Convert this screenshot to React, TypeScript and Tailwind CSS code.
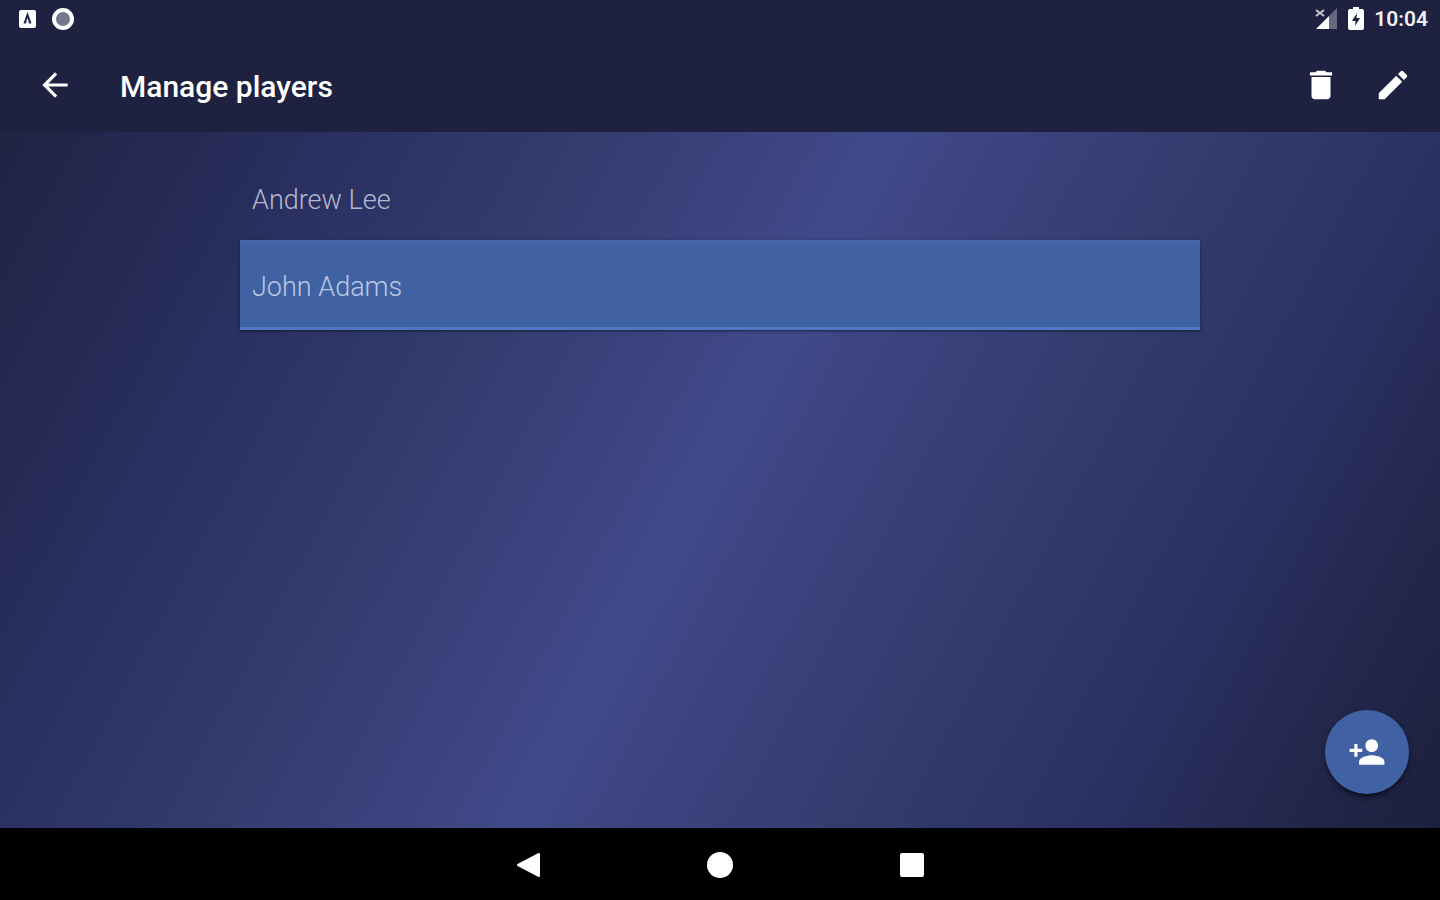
import { useState } from 'react';
import { MdArrowBack, MdDelete, MdEdit, MdPersonAdd } from 'react-icons/md';

const players = ['Andrew Lee', 'John Adams'];

const StatusBar = () => {
  return (
    <div className="flex h-[38px] items-center justify-between pl-[18px] pr-3">
      <div className="flex items-center gap-3">
        <svg width="20" height="20" viewBox="0 0 20 20" aria-hidden="true">
          <rect x="1" y="1" width="17" height="18" rx="2" fill="#fff" />
          <path d="M6.5 14.5 9.5 6l3 8.500M7.500 12.500h1M10.500 12.500h1" fill="none" stroke="#1e2140" strokeWidth="2" />
        </svg>
        <svg width="26" height="24" viewBox="0 0 26 24" aria-hidden="true">
          <circle cx="13" cy="12" r="9" fill="#77778f" stroke="#fff" strokeWidth="4" />
        </svg>
      </div>
      <div className="flex items-center gap-2.5">
        <svg width="24" height="22" viewBox="0 0 24 22" aria-hidden="true">
          <path d="M23 0v21h-8V8z" fill="#66687f" />
          <path d="M15 8v13H2z" fill="#fff" />
          <path d="m2 2 8 6M10 2 2 8" stroke="#c4c5d0" strokeWidth="2" />
        </svg>
        <svg width="16" height="24" viewBox="0 0 16 24" aria-hidden="true">
          <path d="M5 0h6v2h3q2 0 2 2v17q0 2-2 2H2q-2 0-2-2V4q0-2 2-2h3z" fill="#fff" />
          <path d="M9 6 4 14h3.500L7 19l5-8H8.500z" fill="#1e2140" />
        </svg>
        <span className="text-[21px] leading-6 font-semibold text-[#f0f0f4]">10:04</span>
      </div>
    </div>
  );
};

const AppBar = () => {
  return (
    <div className="flex h-[94px] items-center pl-9 pr-7">
      <button type="button" aria-label="Back" className="flex size-[38px] items-center justify-center">
        <MdArrowBack size={38} />
      </button>
      <h1 className="ml-[46px] flex-1 pt-1 text-[30px] leading-8 font-medium">Manage players</h1>
      <div className="flex items-center gap-[34px]">
        <button type="button" aria-label="Delete player">
          <MdDelete size={38} />
        </button>
        <button type="button" aria-label="Edit player">
          <MdEdit size={38} />
        </button>
      </div>
    </div>
  );
};

const NavigationBar = () => {
  return (
    <nav className="flex h-[72px] items-center justify-center bg-black pt-0.5">
      <button type="button" aria-label="Back" className="flex w-48 justify-center">
        <svg width="26" height="28" viewBox="0 0 26 28">
          <path d="M3 14 24 3v22z" fill="#fff" stroke="#fff" strokeWidth="2" strokeLinejoin="round" />
        </svg>
      </button>
      <button type="button" aria-label="Home" className="flex w-48 justify-center">
        <span className="size-[26px] rounded-full bg-white" />
      </button>
      <button type="button" aria-label="Recent apps" className="flex w-48 justify-center">
        <span className="size-6 rounded-xs bg-white" />
      </button>
    </nav>
  );
};

export default function App() {
  const [selected, setSelected] = useState('John Adams');

  return (
    <div className="flex min-h-screen flex-col bg-[#1e2140] font-['Roboto',sans-serif] text-white">
      <header>
        <StatusBar />
        <AppBar />
      </header>
      <main className="relative flex-1 bg-[linear-gradient(118deg,#1f2444_0%,#252b54_11%,#2b3163_20%,#343c70_33%,#3d4482_44%,#404989_48%,#404989_50%,#3d4482_54%,#343c70_66%,#2b3163_80%,#22274b_91%,#1d203e_100%)] pt-5">
        <ul className="mx-auto w-2/3">
          {players.map((player) => (
            <li key={player}>
              <button
                type="button"
                aria-pressed={player === selected}
                onClick={() => setSelected(player)}
                className={
                  player === selected
                    ? 'block w-full border-y-3 border-t-[#4566ad] border-b-[#4f78c4] bg-[#4062a2] px-3 pt-7 pb-6 text-left text-[27px] leading-8 font-light text-[#b9c8e2] shadow-sm shadow-black/40'
                    : 'block w-full px-3 pt-8 pb-6 text-left text-[27px] leading-8 font-light text-[#b4b7ce]'
                }
              >
                {player}
              </button>
            </li>
          ))}
        </ul>
        <button
          type="button"
          aria-label="Add player"
          className="absolute right-[31px] bottom-[34px] flex size-[84px] items-center justify-center rounded-full bg-[#4062a4] shadow-md shadow-black/50"
        >
          <MdPersonAdd size={38} />
        </button>
      </main>
      <NavigationBar />
    </div>
  );
}
